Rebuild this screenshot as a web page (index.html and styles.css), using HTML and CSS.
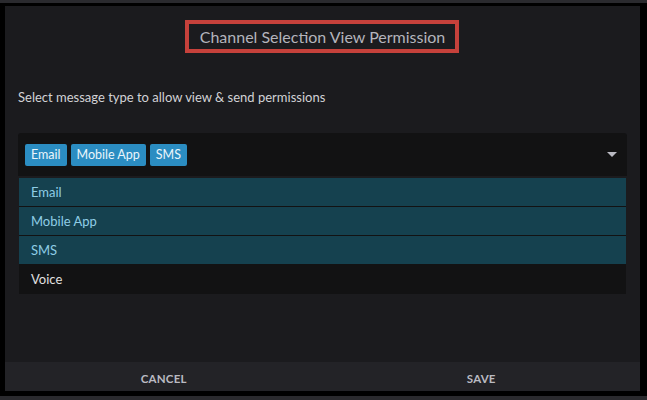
FILE: index.html
```html
<!DOCTYPE html>
<html>
<head>
<meta charset="utf-8">
<link rel="stylesheet" href="styles.css">
</head>
<body>
<div class="frame">
  <div class="dialog">
    <div class="content">
      <div class="title-row">
        <h1 class="title">Channel Selection View Permission</h1>
      </div>
      <p class="hint">Select message type to allow view &amp; send permissions</p>
      <div class="select">
        <div class="control">
          <div class="tags">
            <span class="tag">Email</span>
            <span class="tag">Mobile App</span>
            <span class="tag">SMS</span>
          </div>
          <svg class="caret" width="10" height="5" viewBox="0 0 10 5"><path d="M0 0H10L5 5Z" fill="#b9b9c2"/></svg>
        </div>
        <ul class="menu">
          <li class="opt selected">Email</li>
          <li class="opt selected">Mobile App</li>
          <li class="opt selected">SMS</li>
          <li class="opt">Voice</li>
        </ul>
      </div>
    </div>
    <div class="footer">
      <button class="btn">CANCEL</button>
      <button class="btn">SAVE</button>
    </div>
  </div>
</div>
</body>
</html>
```
FILE: styles.css
```css
html, body {
  margin: 0;
  padding: 0;
  height: 100%;
  background: #2a2a2e;
}
body {
  font-family: Lato, "Noto Sans", sans-serif;
  padding-top: 3px;
  box-sizing: border-box;
}
.frame {
  background: #000;
  height: 393px;
  padding: 3px 7px 5px 5px;
  box-sizing: border-box;
}
.dialog {
  background: #1b1b1e;
  height: 385px;
  display: flex;
  flex-direction: column;
}
.content {
  flex: 1;
  padding: 0 13px 0 13px;
}
.title-row {
  display: flex;
  justify-content: center;
  padding-top: 14px;
}
.title {
  margin: 0 0 0 -2px;
  border: 4px solid #c6413b;
  width: 264px;
  height: 25px;
  box-sizing: content-box;
  font-size: 16px;
  font-weight: 400;
  color: #b4b4bc;
  line-height: 25px;
  text-align: center;
  padding: 0 0 0 2px;
}
.hint {
  margin: 36px 0 0 0;
  font-size: 13px;
  line-height: 16px;
  color: #d2d2d6;
}
.select {
  margin-top: 28px;
}
.control {
  background: #121213;
  height: 43px;
  border-radius: 3px 3px 0 0;
  display: flex;
  align-items: center;
  padding: 0 10px 0 7px;
}
.tags {
  flex: 1;
  display: flex;
  gap: 4px;
}
.tag {
  background: #2b8dc2;
  color: #eaf5fb;
  font-size: 12.5px;
  height: 22px;
  line-height: 22px;
  padding: 0 6px;
  border-radius: 2px;
}
.caret {
  display: block;
}
.menu {
  list-style: none;
  margin: 2px 1px 0 1px;
  padding: 0;
  background: #121213;
}
.opt {
  height: 28px;
  line-height: 28px;
  padding-left: 12px;
  font-size: 13px;
  color: #e0e0e0;
  border-bottom: 1px solid #121213;
}
.opt:last-child {
  border-bottom: 0;
  height: 29px;
}
.opt.selected {
  background: #15414f;
  color: #8fcde6;
}
.footer {
  height: 29px;
  background: #232327;
  display: flex;
}
.btn {
  flex: 1;
  background: none;
  border: 0;
  padding: 0;
  font-family: Lato, "Noto Sans", sans-serif;
  font-size: 11.5px;
  font-weight: 700;
  color: #babac2;
  letter-spacing: 0.2px;
  padding-top: 4px;
}
```
